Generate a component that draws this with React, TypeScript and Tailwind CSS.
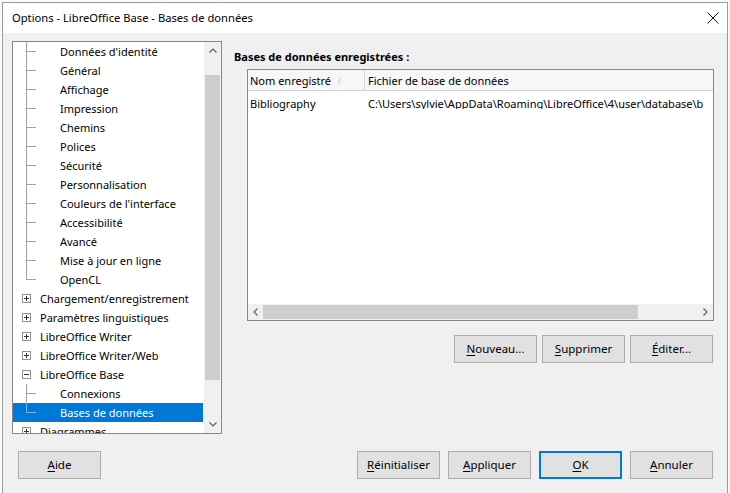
import React from "react";

type Node = {
  label: string;
  level: 0 | 1;
  box?: "plus" | "minus";
  line?: "mid" | "end";
  selected?: boolean;
};

const nodes: Node[] = [
  { label: "Données d'identité", level: 1, line: "mid" },
  { label: "Général", level: 1, line: "mid" },
  { label: "Affichage", level: 1, line: "mid" },
  { label: "Impression", level: 1, line: "mid" },
  { label: "Chemins", level: 1, line: "mid" },
  { label: "Polices", level: 1, line: "mid" },
  { label: "Sécurité", level: 1, line: "mid" },
  { label: "Personnalisation", level: 1, line: "mid" },
  { label: "Couleurs de l'interface", level: 1, line: "mid" },
  { label: "Accessibilité", level: 1, line: "mid" },
  { label: "Avancé", level: 1, line: "mid" },
  { label: "Mise à jour en ligne", level: 1, line: "mid" },
  { label: "OpenCL", level: 1, line: "end" },
  { label: "Chargement/enregistrement", level: 0, box: "plus" },
  { label: "Paramètres linguistiques", level: 0, box: "plus" },
  { label: "LibreOffice Writer", level: 0, box: "plus" },
  { label: "LibreOffice Writer/Web", level: 0, box: "plus" },
  { label: "LibreOffice Base", level: 0, box: "minus" },
  { label: "Connexions", level: 1, line: "mid" },
  { label: "Bases de données", level: 1, line: "end", selected: true },
  { label: "Diagrammes", level: 0, box: "plus" },
];

const Mnemonic: React.FC<{ first: string; rest: string }> = ({ first, rest }) => (
  <span>
    <span className="underline underline-offset-2">{first}</span>
    {rest}
  </span>
);

const Button: React.FC<{ children: React.ReactNode; primary?: boolean }> = ({ children, primary }) => (
  <button
    className={
      "h-[28px] w-[83px] bg-[#e1e1e1] text-[11.5px] text-black flex items-center justify-center " +
      (primary ? "border-2 border-[#0078d7]" : "border border-[#adadad]")
    }
  >
    {children}
  </button>
);

const TreeRow: React.FC<{ node: Node }> = ({ node }) => {
  const lineColor = node.selected ? "bg-[#7fb4e6]" : "bg-[#a0a0a0]";
  return (
    <div
      className={
        "relative h-[19px] flex items-center w-[190px] " +
        (node.selected ? "bg-[#0078d7] text-white" : "text-black")
      }
    >
      {node.level === 1 && (
        <>
          <span
            className={
              "absolute left-[13px] top-0 w-px " +
              lineColor +
              (node.line === "end" ? " h-[10px]" : " h-[19px]")
            }
          />
          <span className={"absolute left-[13px] top-[9px] h-px w-[10px] " + lineColor} />
        </>
      )}
      {node.box && (
        <span className="absolute left-[9px] top-[5px] w-[9px] h-[9px] border border-[#919191] bg-white">
          <span className="absolute left-[1px] top-[3px] w-[5px] h-px bg-[#333]" />
          {node.box === "plus" && <span className="absolute left-[3px] top-[1px] w-px h-[5px] bg-[#333]" />}
        </span>
      )}
      <span className={"whitespace-nowrap " + (node.level === 1 ? "pl-[47px]" : "pl-[27px]")}>{node.label}</span>
    </div>
  );
};

export default function App() {
  return (
    <div className="w-[730px] h-[493px] bg-[#fafafa] overflow-hidden font-['Noto_Sans',sans-serif] text-[11px] leading-none">
      <div className="ml-[2px] mt-[2px] w-[726px] h-[491px] border-l border-t border-r border-[#9a9a9a] bg-[#f0f0f0] flex flex-col">
        {/* title bar */}
        <div className="h-[30px] bg-white flex items-center justify-between pl-[9px] pr-[7px] shrink-0">
          <span className="text-[11.2px] text-black">Options - LibreOffice Base - Bases de données</span>
          <svg width="12" height="12" viewBox="0 0 12 12" className="mr-[1px]">
            <path d="M0.5 0.5 L11.5 11.5 M11.5 0.5 L0.5 11.5" stroke="#111" strokeWidth="1" />
          </svg>
        </div>

        {/* body */}
        <div className="flex pl-[9px] pt-[8px] h-[393px] shrink-0">
          {/* tree */}
          <div className="w-[210px] h-[393px] border border-[#828790] bg-white flex overflow-hidden">
            <div className="flex-1">
              {nodes.map((n) => (
                <TreeRow key={n.label} node={n} />
              ))}
            </div>
            <div className="w-[17px] h-full bg-[#f0f0f0] flex flex-col items-center">
              <div className="h-[17px] w-full flex items-center justify-center">
                <svg width="8" height="5" viewBox="0 0 8 5">
                  <path d="M0.5 4.5 L4 1 L7.5 4.5" stroke="#606060" strokeWidth="1.2" fill="none" />
                </svg>
              </div>
              <div className="mt-[16px] w-[15px] h-[305px] bg-[#cdcdcd]" />
              <div className="flex-1" />
              <div className="h-[17px] w-full flex items-center justify-center">
                <svg width="8" height="5" viewBox="0 0 8 5">
                  <path d="M0.5 0.5 L4 4 L7.5 0.5" stroke="#606060" strokeWidth="1.2" fill="none" />
                </svg>
              </div>
            </div>
          </div>

          {/* right panel */}
          <div className="ml-[12px] flex flex-col">
            <div className="mt-[10px] font-bold text-[11px] text-black">Bases de données enregistrées :</div>
            <div className="ml-[13px] mt-[7px] w-[467px] h-[252px] border border-[#828790] bg-white flex flex-col">
              <div className="flex h-[21px] border-b border-[#d5d5d5] bg-[#f7f7f7]">
                <div className="w-[117px] border-r border-[#d5d5d5] flex items-center pl-[2px] relative">
                  Nom enregistré
                  <span className="absolute left-[90px] text-[9px] text-[#c0c0c0]">/</span>
                </div>
                <div className="flex-1 flex items-center pl-[3px]">Fichier de base de données</div>
              </div>
              <div className="flex h-[22px] items-center mt-[1px]">
                <div className="w-[118px] pl-[2px]">Bibliography</div>
                <div className="pl-[2px] whitespace-nowrap overflow-hidden w-[344px]">
                  C:\Users\sylvie\AppData\Roaming\LibreOffice\4\user\database\b
                </div>
              </div>
              <div className="flex-1" />
              <div className="h-[16px] bg-[#f0f0f0] flex items-center">
                <div className="w-[15px] flex items-center justify-center">
                  <svg width="5" height="8" viewBox="0 0 5 8">
                    <path d="M4.5 0.5 L1 4 L4.5 7.5" stroke="#606060" strokeWidth="1.2" fill="none" />
                  </svg>
                </div>
                <div className="w-[375px] h-[14px] bg-[#cdcdcd]" />
                <div className="flex-1" />
                <div className="w-[15px] flex items-center justify-center">
                  <svg width="5" height="8" viewBox="0 0 5 8">
                    <path d="M0.5 0.5 L4 4 L0.5 7.5" stroke="#606060" strokeWidth="1.2" fill="none" />
                  </svg>
                </div>
              </div>
            </div>
            <div className="ml-[13px] w-[466px] mt-[14px] flex justify-end gap-[5px]">
              <Button>
                <Mnemonic first="N" rest="ouveau..." />
              </Button>
              <Button>
                <Mnemonic first="S" rest="upprimer" />
              </Button>
              <Button>
                <Mnemonic first="É" rest="diter..." />
              </Button>
            </div>
          </div>
        </div>

        {/* bottom buttons */}
        <div className="flex pl-[15px] pr-[14px] mt-[25px] items-center">
          <Button>
            <Mnemonic first="A" rest="ide" />
          </Button>
          <div className="flex-1" />
          <div className="flex gap-[8px]">
            <Button>
              <Mnemonic first="R" rest="éinitialiser" />
            </Button>
            <Button>
              <Mnemonic first="A" rest="ppliquer" />
            </Button>
            <Button primary>
              <Mnemonic first="O" rest="K" />
            </Button>
            <Button>
              <Mnemonic first="A" rest="nnuler" />
            </Button>
          </div>
        </div>
      </div>
    </div>
  );
}
